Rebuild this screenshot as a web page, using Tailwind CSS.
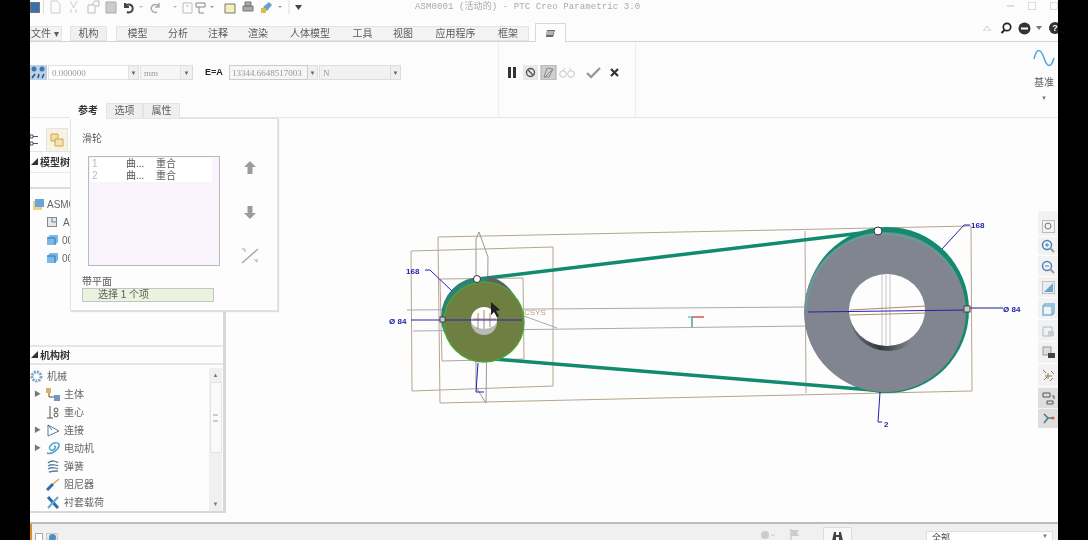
<!DOCTYPE html>
<html lang="zh">
  <head>
    <meta charset="UTF-8" />
    <title>ASM0001 - PTC Creo Parametric 3.0</title>
    <script src="https://cdn.jsdelivr.net/npm/@tailwindcss/browser@4"></script>
  </head>
  <body class="bg-black overflow-hidden">
    <div class="w-[1088px] h-[540px] px-[30px] bg-black font-['Liberation_Sans','Noto_Sans_CJK_SC',sans-serif]">
      <div class="relative w-[1028px] h-[540px] overflow-hidden bg-[#fdfdfd] flex flex-col blur-[0.6px] text-[#5c5c5c]">
        <!-- barra rapida -->
        <div class="h-[23px] shrink-0 flex items-center pb-[9px] bg-[#fcfcfc]">
          <div class="w-[10px] h-[11px] bg-[#3b6fa8] border border-[#777]"></div>
          <div class="w-px h-[14px] bg-[#ddd] ml-[3px] mr-[6px]"></div>
          <svg class="w-[270px] h-[14px]" viewBox="0 0 270 14" fill="none">
            <path d="M1 1h6l3 3v9H1z" stroke="#ccc" />
            <path d="M20 1l4 7m3-7l-4 7M21 13v-4m5 4v-4" stroke="#ccc" />
            <path d="M38 5h7v8h-7zM42 4l3-3h4v5h-3" stroke="#bbb" />
            <path d="M56 2h10v11H56z" fill="#ccc" stroke="#aaa" />
            <path d="M75 7a4 4 0 1 1 2 5M75 3v4h4" stroke="#444" stroke-width="2" />
            <path d="M89 6h4l-2 2z" fill="#bbb" />
            <path d="M109 7a4 4 0 1 0-2 5M109 3v4h-4" stroke="#aaa" stroke-width="1.5" />
            <path d="M123 6h4l-2 2z" fill="#bbb" />
            <path d="M133 3h9v10h-9zM136 6h3" stroke="#bbb" />
            <path d="M146 3h9v4h-9zM149 7v6h5" stroke="#888" />
            <path d="M160 6h4l-2 2z" fill="#999" />
            <path d="M175 4h10v9h-10z" fill="#f5eebd" stroke="#777" />
            <path d="M193 6h10v5h-10zM195 2h6v4h-6z" fill="#aaa" stroke="#777" />
            <path d="M213 7l6-5 3 3-5 6z" fill="#6d9fd0" />
            <path d="M211 8h5v5h-5z" fill="#e0b94e" />
            <path d="M228 6h4l-2 2z" fill="#999" />
            <path d="M239 0v14" stroke="#ddd" />
            <path d="M245 5h7l-3.5 5z" fill="#444" />
          </svg>
          <span class="absolute left-[385px] top-[1px] font-['Liberation_Mono','Noto_Sans_CJK_SC',monospace] text-[9px] leading-[12px] text-[#aaa] tracking-[0.1px] whitespace-nowrap">ASM0001 (活动的) - PTC Creo Parametric 3.0</span>
          <div class="absolute right-0 top-[2px] flex gap-[14px] items-center">
            <div class="w-[7px] h-[2px] bg-[#ddd]"></div>
            <div class="w-[8px] h-[8px] border border-[#ddd]"></div>
            <div class="w-[8px] h-[8px] border border-[#ddd]"></div>
          </div>
        </div>

        <!-- pestañas -->
        <div class="h-[19px] shrink-0 flex items-end border-b border-[#d4d4d4] text-[10px] relative">
          <div class="w-[32px] h-[15px] bg-[#f3f3f3] border border-[#e4e4e4] leading-[13px]">文件 ▾</div>
          <div class="w-[37px] h-[15px] ml-[8px] bg-[#f0f0f0] border border-[#e4e4e4] text-center leading-[13px]">机构</div>
          <div class="flex h-[15px] ml-[9px] bg-[#f3f3f3] border border-[#e4e4e4] leading-[13px] text-center">
            <span class="w-[41px]">模型</span>
            <span class="w-[40px]">分析</span>
            <span class="w-[40px]">注释</span>
            <span class="w-[40px]">渲染</span>
            <span class="w-[64px]">人体模型</span>
            <span class="w-[41px]">工具</span>
            <span class="w-[40px]">视图</span>
            <span class="w-[65px]">应用程序</span>
            <span class="w-[40px]">框架</span>
          </div>
          <div class="w-[31px] h-[19px] ml-[6px] -mb-px bg-[#fdfdfd] border border-b-0 border-[#d8d8d8] flex items-center justify-center">
            <svg class="w-[11px] h-[9px]" viewBox="0 0 11 9"><path d="M2 1h8L8 8H1z" fill="#666" /><path d="M2 3h7M2 5h6" stroke="#fff" /></svg>
          </div>
          <div class="absolute left-[953px] top-[-4px] flex items-center h-[18px]">
            <svg class="w-[8px] h-[6px]" viewBox="0 0 8 6"><path d="M0 6l4-5 4 5z" fill="none" stroke="#ccc" /></svg>
            <svg class="w-[12px] h-[12px] ml-[9px]" viewBox="0 0 12 12" fill="none"><circle cx="7" cy="5" r="3.7" stroke="#222" stroke-width="1.7" /><path d="M4.5 8L1.5 11" stroke="#222" stroke-width="2" /></svg>
            <svg class="w-[13px] h-[13px] ml-[6px]" viewBox="0 0 13 13"><circle cx="6.5" cy="6.5" r="6" fill="#333" /><path d="M3 6.5h7" stroke="#fff" stroke-width="2" /></svg>
            <svg class="w-[6px] h-[4px] ml-[5px]" viewBox="0 0 6 4"><path d="M0 0h6L3 4z" fill="#777" /></svg>
            <span class="w-[12px] h-[12px] ml-[7px] rounded-full bg-[#333] text-white text-[9px] leading-[12px] text-center font-bold">?</span>
          </div>
        </div>

        <!-- cinta -->
        <div class="h-[76px] shrink-0 flex border-b border-[#e6e6e6] bg-[#fcfcfc]">
          <div class="w-[469px] h-full flex items-start pt-[23px] border-r border-[#eee]">
            <svg class="w-[17px] h-[15px]" viewBox="0 0 17 15"><rect width="17" height="15" fill="#bcd0e4" /><circle cx="4" cy="4" r="2.5" fill="#3979b5" /><circle cx="12" cy="4" r="2.5" fill="#3979b5" /><path d="M2 13l3-4m3 4l1-4m3 4l2-4" stroke="#26537f" stroke-width="1.5" /></svg>
            <div class="ml-[1px] flex h-[15px] text-[9px] leading-[14px] text-[#999]">
              <div class="w-[81px] bg-white border border-[#e2e2e2] pl-[3px] font-['Liberation_Serif','Noto_Sans_CJK_SC',serif]">0.000000</div>
              <div class="w-[10px] bg-[#efefef] border-y border-r border-[#ddd] text-center text-[6px] text-[#666]">▼</div>
              <div class="w-[41px] ml-[1px] bg-[#f6f6f6] border border-[#e2e2e2] pl-[3px] font-['Liberation_Serif',serif]">mm</div>
              <div class="w-[12px] bg-[#f0f0f0] border-y border-r border-[#ddd] text-center text-[6px] text-[#666]">▼</div>
            </div>
            <span class="ml-[12px] w-[24px] text-[9px] leading-[14px] font-bold text-[#222]">E=A</span>
            <div class="flex h-[15px] text-[9px] leading-[14px] text-[#999]">
              <div class="w-[79px] bg-[#f6f6f6] border border-[#ccc] pl-[2px] font-['Liberation_Serif',serif] whitespace-nowrap overflow-hidden">13344.6648517003</div>
              <div class="w-[10px] bg-[#efefef] border-y border-r border-[#ddd] text-center text-[6px] text-[#666]">▼</div>
              <div class="w-[72px] ml-[1px] bg-[#f2f2f2] border border-[#ddd] pl-[3px] font-['Liberation_Serif',serif]">N</div>
              <div class="w-[10px] bg-[#efefef] border-y border-r border-[#ddd] text-center text-[6px] text-[#666]">▼</div>
            </div>
          </div>
          <div class="w-[137px] h-full flex items-start pt-[23px] border-r border-[#eee]">
            <svg class="w-[130px] h-[15px]" viewBox="0 0 130 15" fill="none">
              <path d="M9 2h3v11H9zM14 2h3v11h-3z" fill="#333" />
              <rect x="24" y="0" width="15" height="15" fill="#e8e8e8" />
              <circle cx="31.5" cy="7.5" r="4" stroke="#555" stroke-width="1.4" /><path d="M29 5l5 5" stroke="#555" stroke-width="1.4" />
              <rect x="42" y="0" width="15" height="15" fill="#cfcfcf" stroke="#aaa" />
              <path d="M45 12l3-9 6 1-4 8zM46 12l7-7" stroke="#888" />
              <circle cx="64" cy="9" r="3.3" stroke="#c8c8c8" /><circle cx="72" cy="9" r="3.3" stroke="#c8c8c8" /><path d="M64 6l2-3m6 3l-2-3" stroke="#c8c8c8" />
              <path d="M88 8l4 4 9-9" stroke="#999" stroke-width="2.4" />
              <path d="M112 4l7 7m0-7l-7 7" stroke="#333" stroke-width="2.2" />
            </svg>
          </div>
          <div class="ml-auto w-[28px] h-full flex flex-col items-center pt-[5px]">
            <svg class="w-[22px] h-[24px]" viewBox="0 0 22 24" fill="none"><path d="M1 12c3-12 7-10 10-1s7 11 10 0" stroke="#4aa8d8" stroke-width="1.5" /></svg>
            <span class="text-[10px] leading-[12px] mt-[6px]">基准</span>
            <span class="text-[6px] leading-[8px] mt-[5px] text-[#777]">▼</span>
          </div>
        </div>

        <!-- cuerpo -->
        <div class="flex-1 flex min-h-0">
          <div class="w-[196px] shrink-0 h-[395px] border-r-[3px] border-b-[2px] border-[#d8d8d8] flex flex-col bg-[#fdfdfd] text-[10px]">
            <div class="h-[34px] shrink-0 pt-[8px] flex items-end border-b border-[#e4e4e4]">
              <svg class="w-[10px] h-[14px] mb-[4px]" viewBox="0 0 10 14" fill="none" stroke="#555"><path d="M0 2h3v3H0zM0 9h3v3H0zM3 3.500h5M3 10.500h5" /></svg>
              <div class="ml-[6px] w-[22px] h-[23px] bg-[#f8f3e0] border border-[#e4e4e4] border-b-0 flex items-center justify-center">
                <svg class="w-[14px] h-[14px]" viewBox="0 0 14 14"><path d="M1 1h7v7H1z" fill="#f3dfa0" stroke="#c9a45c" /><path d="M5 6h8v7H5z" fill="#f5e3ac" stroke="#c9a45c" /></svg>
              </div>
            </div>
            <div class="h-[21px] shrink-0 flex items-center pl-[1px] border-b border-[#e8e8e8] font-bold text-[#333]"><span class="text-[7px] mr-[2px]">◢</span>模型树</div>
            <div class="h-[16px] shrink-0 border-b-2 border-[#dcdcdc]"></div>
            <div class="h-[156px] shrink-0 pl-[3px] pt-[8px] flex flex-col gap-[4px] text-[#666]">
              <div class="h-[14px] flex items-center gap-[3px]">
                <svg class="w-[11px] h-[11px]" viewBox="0 0 11 11"><path d="M0 2h9v9H0z" fill="#eecf86" /><path d="M2 0h9v8H2z" fill="#6aa5d8" /></svg>ASM0001.ASM
              </div>
              <div class="h-[14px] flex items-center gap-[6px] pl-[14px]">
                <svg class="w-[10px] h-[10px]" viewBox="0 0 10 10"><rect x=".5" y=".5" width="9" height="9" fill="#e6e6e6" stroke="#888" /><path d="M5 1v4h4" stroke="#5588bb" fill="none" /></svg>ASM
              </div>
              <div class="h-[14px] flex items-center gap-[4px] pl-[14px]">
                <svg class="w-[11px] h-[10px]" viewBox="0 0 11 10"><path d="M0 3l3-3h8v7l-3 3H0z" fill="#7bb7e8" /><path d="M0 3h8v7" fill="none" stroke="#2c78b8" /></svg>0001.PRT
              </div>
              <div class="h-[14px] flex items-center gap-[4px] pl-[14px]">
                <svg class="w-[11px] h-[10px]" viewBox="0 0 11 10"><path d="M0 3l3-3h8v7l-3 3H0z" fill="#7bb7e8" /><path d="M0 3h8v7" fill="none" stroke="#2c78b8" /></svg>0002.PRT
              </div>
            </div>
            <div class="h-[20px] shrink-0 border-y-2 border-[#e6e6e6] flex items-center pl-[1px] font-bold text-[#333]"><span class="text-[7px] mr-[2px]">◢</span>机构树</div>
            <div class="flex-1 flex min-h-0 overflow-hidden">
              <div class="flex-1 pt-[3px] flex flex-col gap-[0.5px] text-[#666]">
                <div class="h-[18px] flex items-center gap-[4px]">
                  <svg class="w-[13px] h-[13px]" viewBox="0 0 13 13"><circle cx="6.500" cy="6.500" r="4.500" fill="none" stroke="#7fa6c4" stroke-width="3" stroke-dasharray="2 1" /></svg>机械
                </div>
                <div class="h-[18px] flex items-center gap-[4px] pl-[4px]">
                  <span class="text-[7px] w-[8px] text-[#777]">▶</span>
                  <svg class="w-[14px] h-[13px]" viewBox="0 0 14 13"><rect width="5" height="5" fill="#d8b25e" /><rect x="8" y="7" width="6" height="6" fill="#6f97c0" /><path d="M3 5v4h5" stroke="#555" fill="none" /></svg>主体
                </div>
                <div class="h-[18px] flex items-center gap-[4px] pl-[16px]">
                  <svg class="w-[14px] h-[13px]" viewBox="0 0 14 13" fill="none" stroke="#555"><path d="M4 0v12M1 12h6" /><circle cx="10" cy="4" r="2" /><circle cx="10" cy="9" r="2" /></svg>重心
                </div>
                <div class="h-[18px] flex items-center gap-[4px] pl-[4px]">
                  <span class="text-[7px] w-[8px] text-[#777]">▶</span>
                  <svg class="w-[14px] h-[13px]" viewBox="0 0 14 13" fill="none" stroke="#4a7ea8"><path d="M2 1v11l11-5zM2 1l4 5" /></svg>连接
                </div>
                <div class="h-[18px] flex items-center gap-[4px] pl-[4px]">
                  <span class="text-[7px] w-[8px] text-[#777]">▶</span>
                  <svg class="w-[14px] h-[13px]" viewBox="0 0 14 13" fill="none" stroke="#4fa3cf" stroke-width="1.500"><path d="M1 11c4 2 11-3 12-7S8 0 5 3s-1 6 2 5 3-4 1-4" /></svg>电动机
                </div>
                <div class="h-[18px] flex items-center gap-[4px] pl-[16px]">
                  <svg class="w-[14px] h-[13px]" viewBox="0 0 14 13" fill="none" stroke="#5c7f9c" stroke-width="1.500"><path d="M2 3c3-3 9-2 10 0M2 6c3-2 9-1 10 0M2 9c3-2 9-1 10 0M3 12c3-1 7-1 9-1" /></svg>弹簧
                </div>
                <div class="h-[18px] flex items-center gap-[4px] pl-[16px]">
                  <svg class="w-[14px] h-[13px]" viewBox="0 0 14 13" fill="none"><path d="M1 12L7 6" stroke="#2c6fa8" stroke-width="3" /><path d="M7 6l6-5" stroke="#d8a94e" stroke-width="1.500" /></svg>阻尼器
                </div>
                <div class="h-[18px] flex items-center gap-[4px] pl-[16px]">
                  <svg class="w-[14px] h-[13px]" viewBox="0 0 14 13" fill="none"><path d="M2 1l10 11" stroke="#2c6fa8" stroke-width="3" /><path d="M12 1L2 12" stroke="#6aa5d8" stroke-width="2" /></svg>衬套载荷
                </div>
              </div>
              <div class="w-[13px] mr-[1px] mt-[3px] shrink-0 bg-[#f0f0f0] flex flex-col items-center text-[6px] text-[#777]">
                <div class="h-[14px] leading-[14px]">▲</div>
                <div class="w-[12px] h-[71px] bg-[#fafafa] border border-[#e2e2e2] flex items-center justify-center"><div class="w-[5px] h-[8px] border-y-2 border-[#ccc]"></div></div>
                <div class="mt-auto h-[14px] leading-[14px]">▼</div>
              </div>
            </div>
          </div>

          <!-- area grafica -->
          <div class="flex-1 relative min-w-0">
            <svg class="absolute left-0 top-0 w-[832px] h-[404px]" viewBox="226 119 832 404" fill="none">
              <defs>
                <linearGradient id="sombra" x1="0" y1="0" x2="1" y2="0">
                  <stop offset="0" stop-color="#6e7178" />
                  <stop offset="0.4" stop-color="#35383d" />
                  <stop offset="0.8" stop-color="#80858f" />
                </linearGradient>
              </defs>
              <g stroke="#b9a38f" stroke-width="1">
                <path d="M438 238L971 227L972 392L440 404Z" />
                <path d="M411 252L553 248L553 387L412 392Z" />
                <path d="M440 280L523 279L524 360L442 362Z" />
                <path d="M805 232L806 394" />
                <path d="M407 311L805 308M413 332L806 327M513 313L557 329" stroke="#aaa" />
                <path d="M811 311L960 306M811 316L960 314" stroke="#b08c66" />
              </g>
              <g stroke="#999" stroke-width="1">
                <path d="M479 233L488 258L486 404L476 388L476 240Z" />
                <path d="M882 276V347M886 276V347M890 276V347" stroke="#c0c0c0" />
                <path d="M963 309H1003" stroke="#1b1b9a" />
              </g>
              <!-- correa -->
              <path d="M478 280L878 232" stroke="#128a6e" stroke-width="3.500" />
              <path d="M493 360L884 392" stroke="#128a6e" stroke-width="3.500" />
              <!-- polea grande -->
              <ellipse cx="887" cy="311" rx="82" ry="83" fill="#128a6e" />
              <ellipse cx="885" cy="313" rx="81" ry="80" fill="#80858f" />
              <path d="M806 310C808 270 840 236 880 235C915 235 940 250 955 275" stroke="#3fb8b0" stroke-width="1" />
              <ellipse cx="888" cy="316" rx="38" ry="36" fill="url(#sombra)" />
              <ellipse cx="887" cy="311" rx="38" ry="36" fill="#fdfdfd" />
              <path d="M882 276V346M886 276V346M890 276V346" stroke="#c4c4c4" />
              <path d="M850 311L926 307M850 316L926 314" stroke="#b08c66" />
              <circle cx="878" cy="232" r="4" fill="#fff" stroke="#333" stroke-width="1" />
              <!-- polea pequeña -->
              <circle cx="481" cy="318" r="40" fill="#2d8175" />
              <path d="M488 277A40 40 0 0 1 518 306L484 320Z" fill="#5d6067" />
              <circle cx="484" cy="323" r="40" fill="#6f7f42" stroke="#49a538" stroke-width="1.500" />
              <circle cx="484" cy="323" r="13" fill="#b9b9bb" />
              <path d="M471 321A13 13 0 0 1 497 321A13 9 0 0 1 471 321Z" fill="#fdfdfd" />
              <path d="M478 314V330M484 311V330M490 314V328M473 320H496" stroke="#b08c66" />
              <circle cx="477" cy="280" r="3.500" fill="#fff" stroke="#333" />
              <!-- cotas -->
              <g stroke="#2222b0" stroke-width="1">
                <path d="M411 321H522" />
                <path d="M808 313L968 311" />
                <path d="M425 271H430L452 292" />
                <path d="M942 250L964 226H970" />
                <path d="M880 393L878 423H882" />
                <path d="M478 364L476 393H484" />
              </g>
              <rect x="440" y="318" width="5" height="5" fill="#ccc" stroke="#444" />
              <rect x="964" y="307" width="6" height="6" fill="#ccc" stroke="#444" />
              <g fill="#2222b0" font-size="8" font-weight="bold">
                <text x="406" y="275" font-family="Liberation Sans">168</text>
                <text x="389" y="325" font-family="Liberation Sans">Ø 84</text>
                <text x="1003" y="313" font-family="Liberation Sans">Ø 84</text>
                <text x="971" y="229" font-family="Liberation Sans">168</text>
                <text x="884" y="428" font-family="Liberation Sans">2</text>
              </g>
              <text x="524" y="316" fill="#b89a78" font-size="8" font-family="Liberation Sans">CSYS</text>
              <!-- triedro -->
              <path d="M692 318H704" stroke="#d9534f" stroke-width="1.500" />
              <path d="M692 318V328" stroke="#3bb36b" stroke-width="1.500" />
              <path d="M688 318H693" stroke="#3b9fd0" stroke-width="1" />
              <path d="M491 303L491 316L494 313L497 318L499 317L496 312L500 311Z" fill="#222" />
            </svg>

            <!-- barra de vista -->
            <div class="absolute right-0 top-[93px] w-[20px] h-[217px] bg-[#f2f2f2] flex flex-col items-center pt-[7px] gap-[1px]">
              <div class="h-[19px] w-[20px] flex items-center justify-center border-b border-white"><svg class="w-[13px] h-[13px]" viewBox="0 0 13 13" fill="none"><rect x=".5" y=".5" width="12" height="12" stroke="#bbb" /><circle cx="6" cy="6" r="3" stroke="#777" /></svg></div>
              <div class="h-[19px] w-[20px] flex items-center justify-center border-b border-white"><svg class="w-[14px] h-[14px]" viewBox="0 0 14 14" fill="none"><circle cx="6" cy="6" r="4.500" stroke="#4a86b8" stroke-width="1.500" /><path d="M4 6h4M6 4v4" stroke="#4a86b8" /><path d="M9 9l4 4" stroke="#999" stroke-width="2" /></svg></div>
              <div class="h-[20px] w-[20px] flex items-center justify-center border-b border-white"><svg class="w-[14px] h-[14px]" viewBox="0 0 14 14" fill="none"><circle cx="6" cy="6" r="4.500" stroke="#4a86b8" stroke-width="1.500" /><path d="M4 6h4" stroke="#4a86b8" /><path d="M9 9l4 4" stroke="#999" stroke-width="2" /></svg></div>
              <div class="h-[21px] w-[20px] flex items-center justify-center border-b border-white"><svg class="w-[13px] h-[13px]" viewBox="0 0 13 13"><rect width="13" height="13" fill="#e8eef3" stroke="#999" /><path d="M2 11L11 2V11Z" fill="#6fa4c8" /></svg></div>
              <div class="h-[21px] w-[20px] flex items-center justify-center border-b border-white"><svg class="w-[13px] h-[13px]" viewBox="0 0 13 13" fill="none"><path d="M1 3h9v9H1zM1 3l2-2h9v9l-2 2" stroke="#7fb3d5" stroke-width="1.500" /></svg></div>
              <div class="h-[21px] w-[20px] flex items-center justify-center border-b border-white"><svg class="w-[13px] h-[13px]" viewBox="0 0 13 13" fill="none"><path d="M1 3h9v9H1z" stroke="#9bbdd5" /><rect x="6" y="7" width="6" height="5" fill="#ccc" /></svg></div>
              <div class="h-[22px] w-[20px] flex items-center justify-center border-b border-white"><svg class="w-[13px] h-[13px]" viewBox="0 0 13 13"><rect x="1" y="1" width="8" height="8" fill="#ddd" stroke="#999" /><rect x="6" y="7" width="7" height="5" fill="#444" /></svg></div>
              <div class="h-[22px] w-[20px] flex items-center justify-center border-b border-white"><svg class="w-[13px] h-[13px]" viewBox="0 0 13 13" fill="none" stroke="#8a7a50"><path d="M1 1l3 3M9 2l3 3M2 11l3-3M8 12l3-3M6 4v6M3 7h7" /></svg></div>
              <div class="h-[21px] w-[20px] flex items-center justify-center bg-[#dedede]"><svg class="w-[13px] h-[13px]" viewBox="0 0 13 13" fill="none" stroke="#555"><path d="M1 1h7v4H1zM10 4h2v3M5 9h6v3H5z" /></svg></div>
              <div class="h-[19px] w-[20px] flex items-center justify-center bg-[#dedede]"><svg class="w-[13px] h-[13px]" viewBox="0 0 13 13" fill="none"><path d="M2 2l4 4-4 5M6 6h6" stroke="#3f7f7f" stroke-width="1.500" /><circle cx="11" cy="6" r="1.500" fill="#d9534f" /></svg></div>
            </div>
          </div>
        </div>

        <!-- barra de estado -->
        <div class="h-[18px] shrink-0 bg-[#f0f0f0] border-t-2 border-[#bdbdbd] flex items-start relative">
          <div class="w-[2px] h-[16px] bg-[#e08a2c]"></div>
          <div class="w-[8px] h-[8px] mt-[9px] ml-[3px] border border-[#aaa] bg-white"></div>
          <div class="w-[12px] h-[7px] mt-[9px] ml-[3px] bg-[#e6e6e6] border border-[#ccc] flex justify-center"><div class="w-[7px] h-[7px] rounded-full bg-[#4b8fc4]"></div></div>
          <div class="w-[8px] h-[8px] mt-[7px] ml-[703px] rounded-full bg-[#ccc]"></div>
          <div class="w-[4px] h-[2px] mt-[10px] ml-[2px] bg-[#ddd]"></div>
          <svg class="w-[9px] h-[12px] mt-[5px] ml-[15px]" viewBox="0 0 9 12"><path d="M1 0v12" stroke="#bbb" /><path d="M1 1h8L7 4l2 3H1z" fill="#ccc" /></svg>
          <div class="w-[29px] h-[16px] ml-[24px] mt-[3px] bg-[#f8f8f8] border border-[#ddd] flex justify-center pt-[3px]">
            <svg class="w-[13px] h-[10px]" viewBox="0 0 13 10"><path d="M1 10l2-9h2v9zM8 10V1h2l2 9z" fill="#444" /><path d="M5 4h3v2H5z" fill="#444" /></svg>
          </div>
          <div class="w-[127px] h-[9px] ml-[74px] mt-[7px] bg-white border border-[#ddd] border-b-0 flex text-[9px] leading-[12px] overflow-hidden">
            <span class="flex-1 pl-[5px] text-[#444]">全部</span>
            <span class="w-[10px] text-[6px] text-[#777] leading-[9px]">▼</span>
          </div>
        </div>

        <!-- panel flotante -->
        <div class="absolute left-[40px] top-[103px] w-[208px] flex flex-col text-[10px]">
          <div class="flex h-[16px] -mb-px relative">
            <div class="w-[36px] bg-[#fdfdfd] text-center leading-[15px] font-bold text-[#333]">参考</div>
            <div class="w-[37px] bg-[#efefef] border border-[#e4e4e4] text-center leading-[14px]">选项</div>
            <div class="w-[37px] bg-[#efefef] border border-[#e4e4e4] text-center leading-[14px]">属性</div>
          </div>
          <div class="h-[193px] bg-[#fdfdfd] border border-[#e2e2e2] shadow-[1px_1px_1px_#ddd] flex flex-col px-[11px] pt-[13px]">
            <div class="leading-[14px]">滑轮</div>
            <div class="flex mt-[10px] ml-[6px]">
              <div class="w-[132px] h-[110px] bg-[#f9f4fc] border border-[#b9b9c2] p-[1px]">
                <div class="w-[122px] h-[12px] bg-white flex leading-[12px]"><span class="w-[36px] pl-[2px] text-[#bbb]">1</span><span class="w-[30px] text-[#555]">曲...</span><span>重合</span></div>
                <div class="w-[122px] h-[12px] bg-white flex leading-[12px]"><span class="w-[36px] pl-[2px] text-[#bbb]">2</span><span class="w-[30px] text-[#555]">曲...</span><span>重合</span></div>
              </div>
              <div class="ml-[21px] flex flex-col items-center pt-[5px]">
                <svg class="w-[12px] h-[13px]" viewBox="0 0 12 13"><path d="M6 0l6 6H8.500v7h-5V6H0z" fill="#9c9c9c" /></svg>
                <svg class="w-[12px] h-[13px] mt-[32px]" viewBox="0 0 12 13"><path d="M6 13L0 7h3.500V0h5v7H12z" fill="#9c9c9c" /></svg>
                <svg class="w-[18px] h-[16px] mt-[29px]" viewBox="0 0 18 16" fill="none" stroke="#aaa"><path d="M1 15L17 1" stroke-width="1.500" /><path d="M1 1h3v3M13 11l3 3v-3" /></svg>
              </div>
            </div>
            <div class="mt-[9px] leading-[13px]">带平面</div>
            <div class="w-[132px] h-[14px] bg-[#e9f3dd] border border-[#c4c4c4] pl-[15px] leading-[12px]">选择 1 个项</div>
          </div>
        </div>
      </div>
    </div>
  </body>
</html>
